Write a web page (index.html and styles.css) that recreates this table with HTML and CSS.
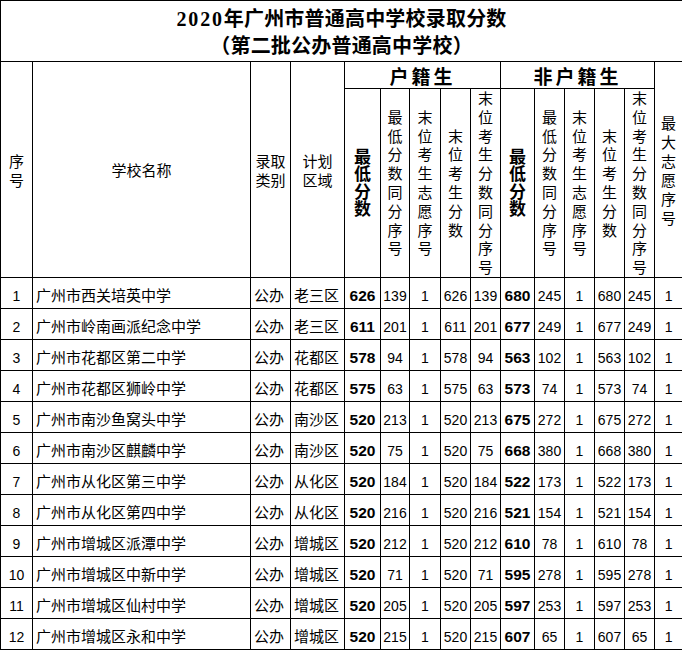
FILE: index.html
```html
<!DOCTYPE html>
<html lang="zh-CN">
<head>
<meta charset="utf-8">
<title>2020年广州市普通高中学校录取分数</title>
<link rel="stylesheet" href="styles.css">
</head>
<body>
<table class="score">
  <colgroup>
    <col class="c-no"><col class="c-name"><col class="c-type"><col class="c-area">
    <col class="c-b36"><col class="c-29"><col class="c-31"><col class="c-30"><col class="c-30">
    <col class="c-b34"><col class="c-30"><col class="c-30"><col class="c-30"><col class="c-30">
    <col class="c-max">
  </colgroup>
  <thead>
    <tr class="r-title">
      <th colspan="15" class="title"><span class="num">2020</span>年广州市普通高中学校录取分数<br>（第二批公办普通高中学校）</th>
    </tr>
    <tr class="r-group">
      <th rowspan="2"><span class="v">序号</span></th>
      <th rowspan="2">学校名称</th>
      <th rowspan="2">录取<br>类别</th>
      <th rowspan="2">计划<br>区域</th>
      <th colspan="5" class="group">户籍生</th>
      <th colspan="5" class="group">非户籍生</th>
      <th rowspan="2"><span class="v">最大志愿序号</span></th>
    </tr>
    <tr class="r-head">
      <th><span class="v b">最低分数</span></th>
      <th><span class="v">最低分数同分序号</span></th>
      <th><span class="v">末位考生志愿序号</span></th>
      <th><span class="v">末位考生分数</span></th>
      <th><span class="v">末位考生分数同分序号</span></th>
      <th><span class="v b">最低分数</span></th>
      <th><span class="v">最低分数同分序号</span></th>
      <th><span class="v">末位考生志愿序号</span></th>
      <th><span class="v">末位考生分数</span></th>
      <th><span class="v">末位考生分数同分序号</span></th>
    </tr>
  </thead>
  <tbody>
    <tr><td class="n">1</td><td class="t">广州市西关培英中学</td><td class="t">公办</td><td class="t">老三区</td><td class="n s">626</td><td class="n">139</td><td class="n">1</td><td class="n">626</td><td class="n">139</td><td class="n s">680</td><td class="n">245</td><td class="n">1</td><td class="n">680</td><td class="n">245</td><td class="n">1</td></tr>
    <tr><td class="n">2</td><td class="t">广州市岭南画派纪念中学</td><td class="t">公办</td><td class="t">老三区</td><td class="n s">611</td><td class="n">201</td><td class="n">1</td><td class="n">611</td><td class="n">201</td><td class="n s">677</td><td class="n">249</td><td class="n">1</td><td class="n">677</td><td class="n">249</td><td class="n">1</td></tr>
    <tr><td class="n">3</td><td class="t">广州市花都区第二中学</td><td class="t">公办</td><td class="t">花都区</td><td class="n s">578</td><td class="n">94</td><td class="n">1</td><td class="n">578</td><td class="n">94</td><td class="n s">563</td><td class="n">102</td><td class="n">1</td><td class="n">563</td><td class="n">102</td><td class="n">1</td></tr>
    <tr><td class="n">4</td><td class="t">广州市花都区狮岭中学</td><td class="t">公办</td><td class="t">花都区</td><td class="n s">575</td><td class="n">63</td><td class="n">1</td><td class="n">575</td><td class="n">63</td><td class="n s">573</td><td class="n">74</td><td class="n">1</td><td class="n">573</td><td class="n">74</td><td class="n">1</td></tr>
    <tr><td class="n">5</td><td class="t">广州市南沙鱼窝头中学</td><td class="t">公办</td><td class="t">南沙区</td><td class="n s">520</td><td class="n">213</td><td class="n">1</td><td class="n">520</td><td class="n">213</td><td class="n s">675</td><td class="n">272</td><td class="n">1</td><td class="n">675</td><td class="n">272</td><td class="n">1</td></tr>
    <tr><td class="n">6</td><td class="t">广州市南沙区麒麟中学</td><td class="t">公办</td><td class="t">南沙区</td><td class="n s">520</td><td class="n">75</td><td class="n">1</td><td class="n">520</td><td class="n">75</td><td class="n s">668</td><td class="n">380</td><td class="n">1</td><td class="n">668</td><td class="n">380</td><td class="n">1</td></tr>
    <tr><td class="n">7</td><td class="t">广州市从化区第三中学</td><td class="t">公办</td><td class="t">从化区</td><td class="n s">520</td><td class="n">184</td><td class="n">1</td><td class="n">520</td><td class="n">184</td><td class="n s">522</td><td class="n">173</td><td class="n">1</td><td class="n">522</td><td class="n">173</td><td class="n">1</td></tr>
    <tr><td class="n">8</td><td class="t">广州市从化区第四中学</td><td class="t">公办</td><td class="t">从化区</td><td class="n s">520</td><td class="n">216</td><td class="n">1</td><td class="n">520</td><td class="n">216</td><td class="n s">521</td><td class="n">154</td><td class="n">1</td><td class="n">521</td><td class="n">154</td><td class="n">1</td></tr>
    <tr><td class="n">9</td><td class="t">广州市增城区派潭中学</td><td class="t">公办</td><td class="t">增城区</td><td class="n s">520</td><td class="n">212</td><td class="n">1</td><td class="n">520</td><td class="n">212</td><td class="n s">610</td><td class="n">78</td><td class="n">1</td><td class="n">610</td><td class="n">78</td><td class="n">1</td></tr>
    <tr><td class="n">10</td><td class="t">广州市增城区中新中学</td><td class="t">公办</td><td class="t">增城区</td><td class="n s">520</td><td class="n">71</td><td class="n">1</td><td class="n">520</td><td class="n">71</td><td class="n s">595</td><td class="n">278</td><td class="n">1</td><td class="n">595</td><td class="n">278</td><td class="n">1</td></tr>
    <tr><td class="n">11</td><td class="t">广州市增城区仙村中学</td><td class="t">公办</td><td class="t">增城区</td><td class="n s">520</td><td class="n">205</td><td class="n">1</td><td class="n">520</td><td class="n">205</td><td class="n s">597</td><td class="n">253</td><td class="n">1</td><td class="n">597</td><td class="n">253</td><td class="n">1</td></tr>
    <tr><td class="n">12</td><td class="t">广州市增城区永和中学</td><td class="t">公办</td><td class="t">增城区</td><td class="n s">520</td><td class="n">215</td><td class="n">1</td><td class="n">520</td><td class="n">215</td><td class="n s">607</td><td class="n">65</td><td class="n">1</td><td class="n">607</td><td class="n">65</td><td class="n">1</td></tr>
  </tbody>
</table>
</body>
</html>
```
FILE: styles.css
```css
html, body {
  margin: 0;
  padding: 0;
  background: #fff;
  color: #000;
  font-family: "Noto Sans CJK SC", sans-serif;
}

.score {
  border-collapse: collapse;
  table-layout: fixed;
  width: 682px;
}

.score th,
.score td {
  border: 1px solid #000;
  padding: 0;
  font-weight: normal;
  text-align: center;
  vertical-align: middle;
  overflow: hidden;
}

.c-no { width: 32px; }
.c-name { width: 218px; }
.c-type { width: 40px; }
.c-area { width: 54px; }
.c-b36 { width: 36px; }
.c-29 { width: 29px; }
.c-31 { width: 31px; }
.c-30 { width: 30px; }
.c-b34 { width: 34px; }
.c-max { width: 28px; }

.r-title { height: 61px; }
.r-group { height: 27px; }
.r-head { height: 189px; }
.score tbody tr { height: 31px; }

.score .title {
  font-family: "Liberation Serif", "Noto Sans CJK SC", serif;
  font-weight: 700;
  font-size: 20px;
  line-height: 27px;
  padding-top: 3px;
  letter-spacing: 0.2px;
}

.title .num {
  letter-spacing: 1.8px;
}

.r-group th {
  font-size: 15px;
  line-height: 19px;
}

.r-group .group {
  font-weight: 700;
  font-size: 19px;
  letter-spacing: 3px;
  line-height: 25px;
}

.r-head th {
  font-size: 15px;
  line-height: 18.8px;
}

.v {
  display: inline-block;
  width: 1em;
  text-align: center;
}

.r-head .b {
  font-weight: 700;
  font-size: 17px;
  line-height: 17.5px;
}

.score td {
  font-size: 15px;
  line-height: 18px;
  padding-top: 4px;
}

.score td.t {
  text-align: left;
  padding-left: 3px;
  white-space: nowrap;
}

.score td.n {
  font-family: "Liberation Sans", "Noto Sans CJK SC", sans-serif;
  font-size: 14px;
  padding-top: 5px;
}

.score td.s {
  font-weight: 700;
  font-size: 15.5px;
}
```
